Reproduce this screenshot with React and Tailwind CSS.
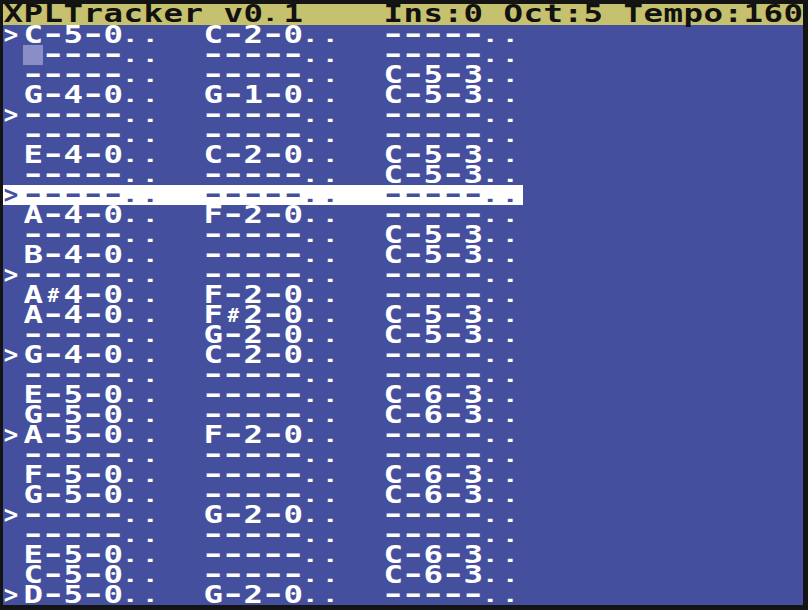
import React from "react";

// 40x30 character screen, 20px cells
const header = "XPLTracker v0.1    Ins:0 Oct:5 Tempo:160";

const rows = [
  ">C-5-0..  C-2-0..  -----..",
  " -----..  -----..  -----..",
  " -----..  -----..  C-5-3..",
  " G-4-0..  G-1-0..  C-5-3..",
  ">-----..  -----..  -----..",
  " -----..  -----..  -----..",
  " E-4-0..  C-2-0..  C-5-3..",
  " -----..  -----..  C-5-3..",
  ">-----..  -----..  -----..",
  " A-4-0..  F-2-0..  -----..",
  " -----..  -----..  C-5-3..",
  " B-4-0..  -----..  C-5-3..",
  ">-----..  -----..  -----..",
  " A#4-0..  F-2-0..  -----..",
  " A-4-0..  F#2-0..  C-5-3..",
  " -----..  G-2-0..  C-5-3..",
  ">G-4-0..  C-2-0..  -----..",
  " -----..  -----..  -----..",
  " E-5-0..  -----..  C-6-3..",
  " G-5-0..  -----..  C-6-3..",
  ">A-5-0..  F-2-0..  -----..",
  " -----..  -----..  -----..",
  " F-5-0..  -----..  C-6-3..",
  " G-5-0..  -----..  C-6-3..",
  ">-----..  G-2-0..  -----..",
  " -----..  -----..  -----..",
  " E-5-0..  -----..  C-6-3..",
  " C-5-0..  -----..  C-6-3..",
  ">D-5-0..  G-2-0..  -----..",
];

const playRow = 8;
const cursor = { row: 1, col: 1 };

// the pixel font has wide dashes and small flat dots
const glyphClass = (ch) => {
  if (ch === "-") return "scale-x-[1.75] -translate-y-[1px]";
  if (ch === ".") return "scale-x-[1.2] scale-y-[0.7] -translate-x-[3px] translate-y-[1px]";
  if (ch === "#") return "scale-[0.8] translate-y-[1px]";
  if (ch === ">") return "-translate-x-[2px]";
  return "scale-x-[1.35]";
};

const Cell = ({ ch, isCursor }) => {
  if (isCursor) return <span className="w-5 h-5 shrink-0 bg-[#8a8ec6]" />;
  return (
    <span className="w-5 h-5 shrink-0 flex justify-center">
      <span className={`leading-5 ${glyphClass(ch)}`}>{ch === " " ? "\u00a0" : ch}</span>
    </span>
  );
};

const Line = ({ text, className, cursorCol = -1 }) => (
  <div className={`flex h-5 ${className}`}>
    {text.split("").map((ch, i) => (
      <Cell key={i} ch={ch} isCursor={i === cursorCol} />
    ))}
  </div>
);

export default function App() {
  return (
    <div className="w-[808px] h-[610px] bg-[#141414] pt-[4px] pl-[3px] overflow-hidden">
      <div
        className="w-[800px] h-[601px] bg-[#44509e] text-white font-bold text-[24px]"
        style={{ fontFamily: '"DejaVu Sans Mono", "Liberation Mono", monospace' }}
      >
        <div className="h-[21px] bg-[#c6c16f] text-[#111111]">
          <Line text={header} />
        </div>
        {rows.map((r, i) => (
          <Line
            key={i}
            text={r}
            className={i === playRow ? "w-[520px] bg-white text-[#44509e]" : ""}
            cursorCol={i === cursor.row ? cursor.col : -1}
          />
        ))}
      </div>
    </div>
  );
}
